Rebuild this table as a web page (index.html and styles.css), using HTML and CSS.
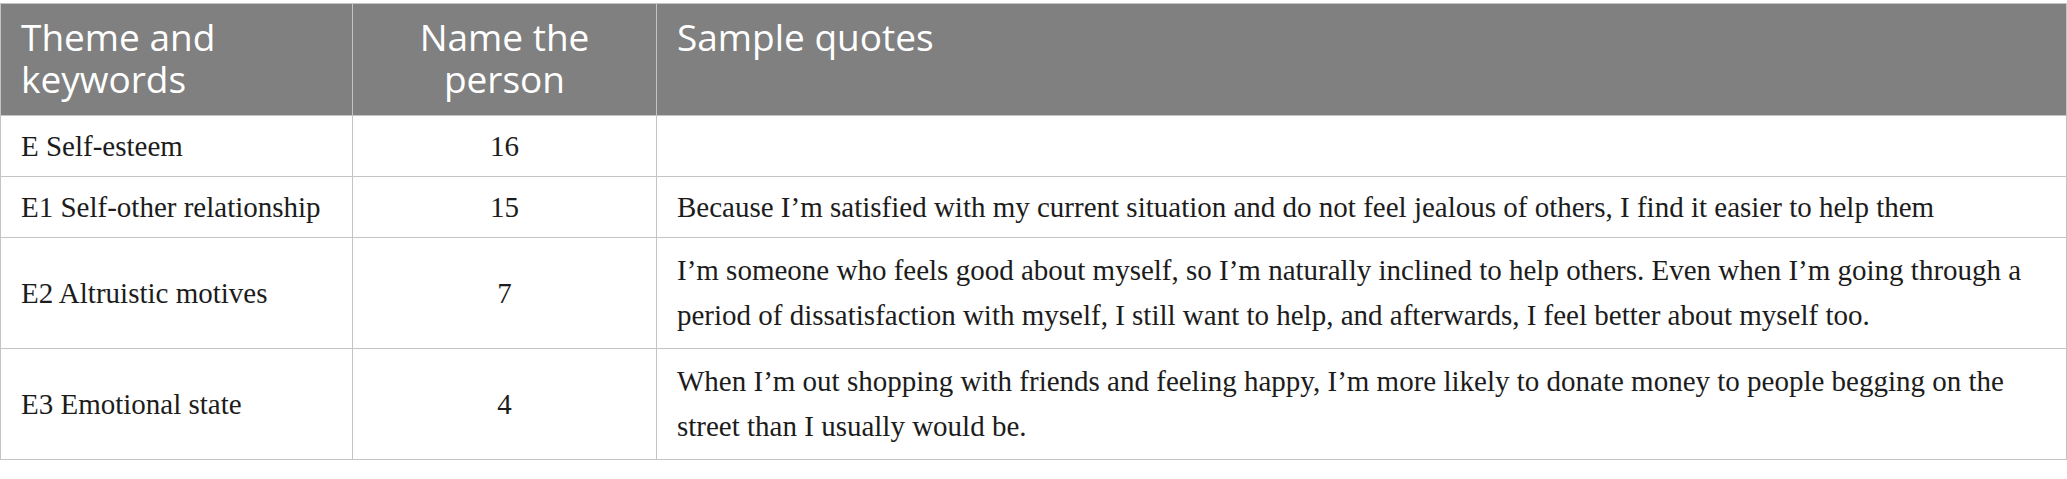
FILE: index.html
```html
<!DOCTYPE html>
<html lang="en">
<head>
<meta charset="utf-8">
<title>Self-esteem themes</title>
<link rel="stylesheet" href="styles.css">
</head>
<body>
<table class="data-table">
  <colgroup>
    <col class="col-theme">
    <col class="col-count">
    <col class="col-quote">
  </colgroup>
  <thead>
    <tr>
      <th class="head-cell">Theme and keywords</th>
      <th class="head-cell head-center">Name the person</th>
      <th class="head-cell">Sample quotes</th>
    </tr>
  </thead>
  <tbody>
    <tr class="row-single">
      <td class="cell">E Self-esteem</td>
      <td class="cell cell-center">16</td>
      <td class="cell"></td>
    </tr>
    <tr class="row-single">
      <td class="cell">E1 Self-other relationship</td>
      <td class="cell cell-center">15</td>
      <td class="cell">Because I’m satisfied with my current situation and do not feel jealous of others, I find it easier to help them</td>
    </tr>
    <tr class="row-double">
      <td class="cell">E2 Altruistic motives</td>
      <td class="cell cell-center">7</td>
      <td class="cell">I’m someone who feels good about myself, so I’m naturally inclined to help others. Even when I’m going through a period of dissatisfaction with myself, I still want to help, and afterwards, I feel better about myself too.</td>
    </tr>
    <tr class="row-double">
      <td class="cell">E3 Emotional state</td>
      <td class="cell cell-center">4</td>
      <td class="cell">When I’m out shopping with friends and feeling happy, I’m more likely to donate money to people begging on the street than I usually would be.</td>
    </tr>
  </tbody>
</table>
</body>
</html>
```

FILE: styles.css
```css
html, body {
  margin: 0;
  padding: 0;
  background: #ffffff;
}

body {
  padding-top: 3px;
}

.data-table {
  width: 2067px;
  border-collapse: collapse;
  table-layout: fixed;
  border: 1px solid #c4c4c4;
}

.col-theme { width: 352px; }
.col-count { width: 304px; }
.col-quote { width: auto; }

.head-cell {
  background: #7f807f;
  color: #ffffff;
  font-family: "Open Sans", "Noto Sans", sans-serif;
  font-weight: 400;
  font-size: 37px;
  line-height: 42px;
  text-align: left;
  vertical-align: top;
  padding: 12px 20px 15px 20px;
  height: 111px;
  box-sizing: border-box;
  border: 1px solid #c4c4c4;
}

.head-center {
  text-align: center;
}

.cell {
  font-family: "Liberation Serif", "Times New Roman", serif;
  font-size: 29px;
  line-height: 45px;
  color: #1c1c1c;
  vertical-align: middle;
  padding: 7px 20px 7px 20px;
  border: 1px solid #c4c4c4;
  box-sizing: border-box;
}

.cell-center {
  text-align: center;
}

.row-single .cell {
  height: 61px;
}

.row-double .cell {
  height: 111px;
}
```
